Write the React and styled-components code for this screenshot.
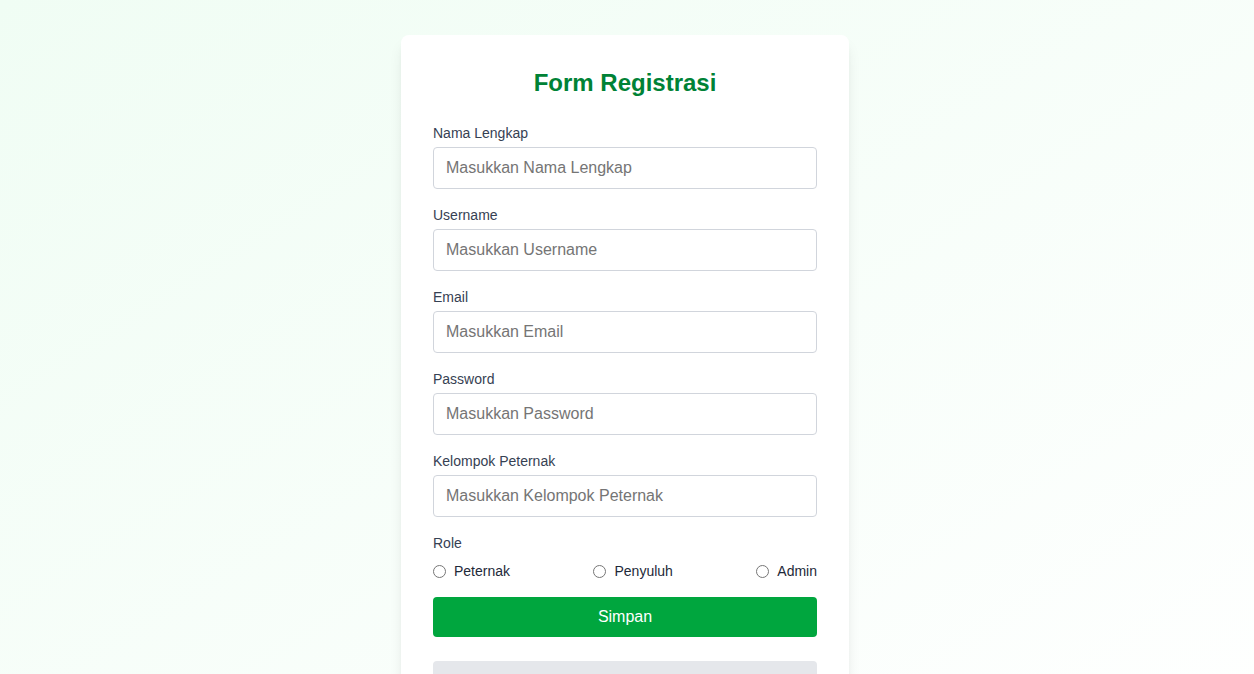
import styled, { createGlobalStyle } from "styled-components";

const GlobalStyle = createGlobalStyle`
    *, *::before, *::after {
        box-sizing: border-box;
    }
    body {
        margin: 0;
        font-family: "Liberation Sans", Arial, sans-serif;
    }
`;

const Page = styled.div`
    min-height: 100vh;
    padding: 35px 20px 40px 16px;
    display: flex;
    justify-content: center;
    align-items: flex-start;
    background: linear-gradient(to bottom right, #f0fdf4, #ffffff);
`;
const Card = styled.form`
    width: 448px;
    background: #ffffff;
    border-radius: 8px;
    padding: 32px;
    box-shadow: 0 10px 15px -3px rgba(0, 0, 0, 0.1), 0 4px 6px -4px rgba(0, 0, 0, 0.1);
`;
const Title = styled.h2`
    margin: 0 0 24px;
    text-align: center;
    font-size: 24px;
    line-height: 32px;
    font-weight: 700;
    color: #008236;
`;
const Field = styled.div`
    margin-bottom: 16px;
`;
const Label = styled.label`
    display: block;
    margin-bottom: ${(p) => (p.$tight ? "8px" : "4px")};
    font-size: 14px;
    line-height: 20px;
    color: #364153;
`;
const Input = styled.input`
    display: block;
    width: 100%;
    height: 42px;
    margin: 0;
    padding: 8px 12px;
    border: 1px solid #d1d5dc;
    border-radius: 4px;
    font-family: inherit;
    font-size: 16px;
    line-height: 24px;
    color: #111827;
    outline: none;
    &::placeholder {
        color: #757575;
    }
`;
const RadioRow = styled.div`
    display: flex;
    justify-content: space-between;
    align-items: center;
`;
const RadioOption = styled.label`
    display: flex;
    align-items: center;
    gap: 8px;
    font-size: 14px;
    line-height: 20px;
    color: #1e2939;
`;
const Radio = styled.input`
    width: 13px;
    height: 13px;
    margin: 0;
`;
const Button = styled.button`
    display: block;
    width: 100%;
    height: 40px;
    margin-bottom: 24px;
    border: none;
    border-radius: 4px;
    font-family: inherit;
    font-size: 16px;
    line-height: 24px;
    cursor: pointer;
    background: ${(p) => (p.$secondary ? "#e5e7eb" : "#00a63e")};
    color: ${(p) => (p.$secondary ? "#1e2939" : "#ffffff")};
`;

const fields = [
    { label: "Nama Lengkap", type: "text" },
    { label: "Username", type: "text" },
    { label: "Email", type: "email" },
    { label: "Password", type: "password" },
    { label: "Kelompok Peternak", type: "text" },
];

const roles = ["Peternak", "Penyuluh", "Admin"];

const App = () => {
    return (
        <Page>
            <GlobalStyle />
            <Card onSubmit={(e) => e.preventDefault()}>
                <Title>Form Registrasi</Title>
                {fields.map((f) => (
                    <Field key={f.label}>
                        <Label>{f.label}</Label>
                        <Input type={f.type} placeholder={`Masukkan ${f.label}`} />
                    </Field>
                ))}
                <Field>
                    <Label $tight>Role</Label>
                    <RadioRow>
                        {roles.map((r) => (
                            <RadioOption key={r}>
                                <Radio type="radio" name="role" value={r} />
                                {r}
                            </RadioOption>
                        ))}
                    </RadioRow>
                </Field>
                <Button type="submit">Simpan</Button>
                <Button type="button" $secondary>Kembali</Button>
            </Card>
        </Page>
    );
};

export default App;
